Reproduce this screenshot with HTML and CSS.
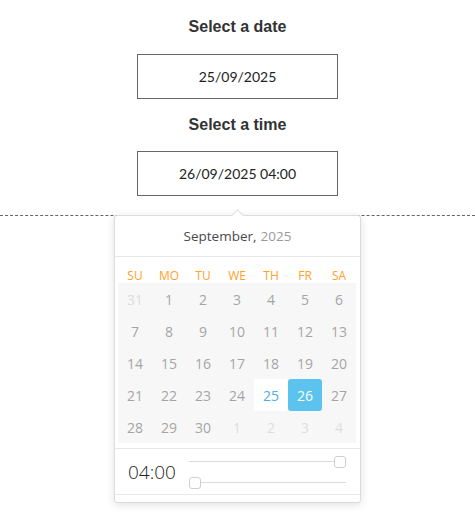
FILE: index.html
```html
<!DOCTYPE html>
<html>
<head>
<meta charset="utf-8">
<link rel="stylesheet" href="styles.css">
</head>
<body>
<div class="page">
  <h2 class="title">Select a date</h2>
  <div class="field">25/09/2025</div>
  <h2 class="title title-second">Select a time</h2>
  <div class="field field-second">26/09/2025 04:00</div>
</div>
<div class="stage">
  <div class="picker">
    <div class="picker-header"><span class="month">September,</span><span class="year">2025</span></div>
    <div class="calendar">
      <div class="weekdays">
        <span>SU</span><span>MO</span><span>TU</span><span>WE</span><span>TH</span><span>FR</span><span>SA</span>
      </div>
      <div class="days">
        <span class="other">31</span><span>1</span><span>2</span><span>3</span><span>4</span><span>5</span><span>6</span>
        <span>7</span><span>8</span><span>9</span><span>10</span><span>11</span><span>12</span><span>13</span>
        <span>14</span><span>15</span><span>16</span><span>17</span><span>18</span><span>19</span><span>20</span>
        <span>21</span><span>22</span><span>23</span><span>24</span><span class="today">25</span><span class="selected">26</span><span>27</span>
        <span>28</span><span>29</span><span>30</span><span class="other">1</span><span class="other">2</span><span class="other">3</span><span class="other">4</span>
      </div>
    </div>
    <div class="time">
      <div class="time-value">04:00</div>
      <div class="sliders">
        <div class="slider"><span class="handle handle-end"></span></div>
        <div class="slider"><span class="handle handle-start"></span></div>
      </div>
    </div>
    <div class="picker-footer"></div>
  </div>
</div>
</body>
</html>
```

FILE: styles.css
```css
html, body {
  margin: 0;
  padding: 0;
  background: #fff;
}

body {
  font-family: "Liberation Sans", Arial, sans-serif;
}

.page {
  display: flex;
  flex-direction: column;
  align-items: center;
  padding-top: 17px;
}

.title {
  margin: 0;
  font-size: 16px;
  line-height: 20px;
  font-weight: bold;
  color: #333;
}

.title-second {
  margin-top: 16px;
}

.field {
  box-sizing: border-box;
  width: 201px;
  height: 45px;
  margin-top: 17px;
  border: 1px solid #666;
  display: flex;
  align-items: center;
  justify-content: center;
  font-family: Lato, sans-serif;
  font-size: 14px;
  color: #222;
}

.field-second {
  margin-top: 16px;
}

.stage {
  position: relative;
  margin-top: 19px;
  padding-bottom: 12px;
}

.stage::before {
  content: "";
  position: absolute;
  top: 0;
  left: 0;
  right: 0;
  border-top: 1px dashed #666;
}

.picker {
  position: relative;
  z-index: 1;
  box-sizing: border-box;
  width: 247px;
  margin: 0 auto;
  background: #fff;
  border: 1px solid #dcdcdc;
  border-radius: 3px;
  box-shadow: 0 2px 8px rgba(0, 0, 0, 0.12);
  font-family: "Open Sans", sans-serif;
}

.picker::before {
  content: "";
  position: absolute;
  top: -5px;
  left: calc(50% - 5px);
  width: 8px;
  height: 8px;
  background: #fff;
  border-top: 1px solid #dcdcdc;
  border-left: 1px solid #dcdcdc;
  transform: rotate(45deg);
}

.picker-header {
  height: 40px;
  display: flex;
  align-items: center;
  justify-content: center;
  gap: 4px;
  border-bottom: 1px solid #e8e8e8;
  font-size: 13.5px;
}

.month {
  color: #4a4a4a;
}

.year {
  color: #9a9a9a;
}

.calendar {
  padding: 8px 4px 5px 3px;
  border-bottom: 1px solid #e8e8e8;
}

.weekdays {
  display: grid;
  grid-template-columns: repeat(7, 34px);
  height: 18px;
  font-size: 12px;
  line-height: 21px;
  color: #ffa02c;
  text-align: center;
}

.days {
  display: grid;
  grid-template-columns: repeat(7, 34px);
  grid-auto-rows: 32px;
  background: #f7f7f7;
}

.days span {
  display: flex;
  align-items: center;
  justify-content: center;
  font-size: 14px;
  color: #a5a5a5;
}

.days .other {
  color: #dedede;
}

.days .today {
  background: #fff;
  color: #4eaee6;
}

.days .selected {
  background: #5bc3ee;
  color: #fff;
  border-radius: 3px;
}

.time {
  height: 45px;
  display: flex;
  align-items: center;
  padding-left: 13px;
  border-bottom: 1px solid #e8e8e8;
}

.time-value {
  font-size: 19px;
  font-weight: 300;
  color: #1f1f1f;
  width: 50px;
  padding-top: 1px;
}

.sliders {
  margin-left: 11px;
  width: 157px;
  display: flex;
  flex-direction: column;
  gap: 9px;
  padding-top: 1px;
}

.slider {
  position: relative;
  height: 12px;
}

.slider::before {
  content: "";
  position: absolute;
  left: 0;
  right: 0;
  top: 5px;
  height: 1px;
  background: #dadada;
}

.handle {
  position: absolute;
  top: 0;
  box-sizing: border-box;
  width: 12px;
  height: 12px;
  background: #fff;
  border: 1px solid #cfcfcf;
  border-radius: 3px;
}

.handle-end {
  right: 0;
}

.handle-start {
  left: 0;
}

.picker-footer {
  height: 7px;
}
```
